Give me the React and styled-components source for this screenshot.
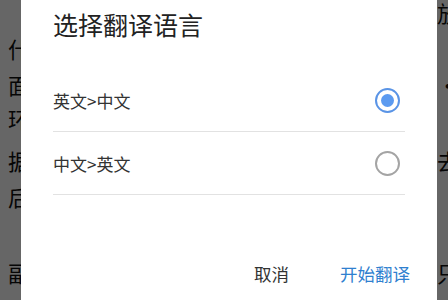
import React, { useState } from 'react';
import styled, { createGlobalStyle } from 'styled-components';

const GlobalStyle = createGlobalStyle`
  html, body {
    margin: 0;
    padding: 0;
    width: 448px;
    height: 300px;
    overflow: hidden;
    font-family: 'Noto Sans CJK SC', 'Noto Sans', sans-serif;
  }
`;

const backgroundLines = [
  { top: 1, left: '', right: '放' },
  { top: 37, left: '什', right: '' },
  { top: 73, left: '面', right: '·' },
  { top: 107, left: '环', right: ')' },
  { top: 149, left: '据', right: '去' },
  { top: 185, left: '后', right: '' },
  { top: 261, left: '副', right: '只' },
];

const languages = ['英文>中文', '中文>英文'];

export default function App() {
  const [selected, setSelected] = useState(0);

  return (
    <Page>
      <GlobalStyle />
      <Article>
        {backgroundLines.map((line, i) => (
          <ArticleLine key={i} style={{ top: line.top }}>
            <span>{line.left}</span>
            <span>{line.right}</span>
          </ArticleLine>
        ))}
      </Article>
      <Backdrop>
        <Dialog>
          <Title>选择翻译语言</Title>
          <Options>
            {languages.map((lang, i) => (
              <Option key={lang} onClick={() => setSelected(i)}>
                <OptionLabel>{lang}</OptionLabel>
                <Radio checked={selected === i} />
              </Option>
            ))}
          </Options>
          <Footer>
            <TextButton>取消</TextButton>
            <TextButton primary>开始翻译</TextButton>
          </Footer>
        </Dialog>
      </Backdrop>
    </Page>
  );
}

const Page = styled.div`
  position: relative;
  width: 448px;
  height: 300px;
  overflow: hidden;
  background: #fff;
`;

const Article = styled.div`
  position: relative;
  height: 300px;
`;

const ArticleLine = styled.div`
  position: absolute;
  left: 8px;
  right: -11px;
  display: flex;
  justify-content: space-between;
  font-size: 22px;
  line-height: 22px;
  color: #111;
`;

const Backdrop = styled.div`
  position: absolute;
  inset: 0;
  background: rgba(0, 0, 0, 0.6);
`;

const Dialog = styled.div`
  position: absolute;
  left: 21px;
  width: 416px;
  top: -10px;
  height: 340px;
  background: #fff;
  box-sizing: border-box;
  padding: 18px 32px 0 32px;
  display: flex;
  flex-direction: column;
`;

const Title = styled.h2`
  margin: 0;
  font-size: 25px;
  line-height: 32px;
  font-weight: 400;
  color: #222;
`;

const Options = styled.div`
  margin-top: 29px;
  display: flex;
  flex-direction: column;
`;

const Option = styled.div`
  height: 62px;
  display: flex;
  align-items: center;
  justify-content: space-between;
  border-bottom: 1px solid #e2e2e2;
  cursor: pointer;
`;

const OptionLabel = styled.span`
  font-size: 17px;
  color: #333;
`;

const Radio = styled.span`
  width: 25px;
  height: 25px;
  margin-right: 5px;
  box-sizing: border-box;
  border-radius: 50%;
  border: 2.5px solid ${(p) => (p.checked ? '#5a94e6' : '#a4a4a4')};
  display: flex;
  align-items: center;
  justify-content: center;
  &::after {
    content: '';
    width: 13px;
    height: 13px;
    border-radius: 50%;
    background: #5b9af0;
    display: ${(p) => (p.checked ? 'block' : 'none')};
  }
`;

const Footer = styled.div`
  margin-top: 67px;
  margin-right: -5px;
  display: flex;
  justify-content: flex-end;
  gap: 51px;
`;

const TextButton = styled.button`
  border: none;
  background: none;
  padding: 0;
  font-family: inherit;
  font-size: 17.5px;
  line-height: 24px;
  color: ${(p) => (p.primary ? '#2f80cf' : '#333')};
  cursor: pointer;
`;
